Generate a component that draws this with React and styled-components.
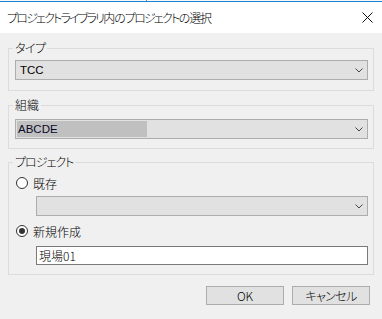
import React from "react";
import styled, { createGlobalStyle } from "styled-components";

const GlobalStyle = createGlobalStyle`
  body {
    margin: 0;
    background: #f0f0f0;
    font-family: "Noto Sans CJK JP", "Liberation Sans", sans-serif;
    font-size: 12px;
    font-weight: 300;
    color: #000;
  }
`;

let Window = styled.div({
  width: "382px",
  height: "319px",
  background: "#f0f0f0",
  display: "flex",
  flexDirection: "column",
  overflow: "hidden",
  position: "relative",
});

let TopEdge = styled.div({
  height: "1px",
  background: "#f7f7f7",
  borderBottom: "1px solid #1883d7",
});

let Tick = styled.div({
  position: "absolute",
  left: "146px",
  top: "0",
  width: "1px",
  height: "1px",
  background: "#8a8a8a",
});

let TitleBar = styled.div({
  height: "31px",
  background: "#fff",
  display: "flex",
  alignItems: "center",
  justifyContent: "space-between",
  padding: "0 9px 0 7px",
});

// katakana in the reference font is narrow, so kana runs get tightened
let Kana = styled.span(({ tight }) => ({
  letterSpacing: `${tight ?? -1}px`,
  fontFeatureSettings: '"palt"',
}));

let TitleText = styled.div({
  fontSize: "12px",
  lineHeight: "14px",
  marginTop: "1px",
  letterSpacing: "-1.2px",
});

let Body = styled.div({
  display: "flex",
  flexDirection: "column",
  padding: "0 8px",
});

let Group = styled.fieldset(({ top, pt, pb }) => ({
  margin: `${top}px 0 0 0`,
  padding: `${pt}px 5px ${pb}px 6px`,
  border: "1px solid #dcdcdc",
  minWidth: 0,
  display: "flex",
  flexDirection: "column",
}));

let Legend = styled.legend({
  padding: "0 2px",
  marginLeft: "-2px",
  lineHeight: "14px",
  height: "14px",
});

let Select = styled.div(({ disabled, indent }) => ({
  height: "20px",
  boxSizing: "border-box",
  border: "1px solid #adadad",
  background: "#e1e1e1",
  marginLeft: indent ? `${indent}px` : 0,
  display: "flex",
  alignItems: "center",
  justifyContent: "space-between",
  padding: "0 4px 0 2px",
  color: disabled ? "#888" : "#000",
}));

let SelectValue = styled.span(({ selected }) => ({
  display: "flex",
  alignItems: "center",
  height: "16px",
  width: selected ? "129px" : "auto",
  paddingLeft: selected ? "1px" : "2px",
  marginLeft: selected ? "-1px" : 0,
  background: selected ? "#c0c0c0" : "transparent",
  fontFamily: '"Liberation Sans", sans-serif',
  fontWeight: 400,
  fontSize: "11.5px",
  color: selected ? "#0a0a28" : "#000",
}));

let RadioRow = styled.label(({ gapTop }) => ({
  display: "flex",
  alignItems: "center",
  height: "14px",
  marginTop: `${gapTop}px`,
  gap: "5px",
  paddingLeft: "1px",
}));

let RadioDot = styled.span(({ checked }) => ({
  width: "12px",
  height: "12px",
  boxSizing: "border-box",
  borderRadius: "50%",
  border: "1px solid #333",
  background: "#fff",
  display: "flex",
  alignItems: "center",
  justifyContent: "center",
  "&::after": {
    content: '""',
    width: "6px",
    height: "6px",
    borderRadius: "50%",
    background: checked ? "#333" : "transparent",
  },
}));

let TextInput = styled.div({
  height: "19px",
  boxSizing: "border-box",
  border: "1px solid #7a7a7a",
  background: "#fff",
  marginLeft: "21px",
  marginTop: "8px",
  display: "flex",
  alignItems: "center",
  padding: "0 2px",
});

let Footer = styled.div({
  display: "flex",
  justifyContent: "flex-end",
  gap: "8px",
  marginTop: "11px",
  paddingRight: "4px",
});

let Button = styled.div({
  width: "78px",
  height: "19px",
  boxSizing: "border-box",
  border: "1px solid #adadad",
  background: "#e1e1e1",
  display: "flex",
  alignItems: "center",
  justifyContent: "center",
});

function Chevron() {
  return (
    <svg width="8" height="5" viewBox="0 0 8 5">
      <path d="M0.5 0.5 L4 4 L7.5 0.5" fill="none" stroke="#444" strokeWidth="1" />
    </svg>
  );
}

function CloseIcon() {
  return (
    <svg width="11" height="11" viewBox="0 0 11 11">
      <path d="M0.5 0.5 L10.5 10.5 M10.5 0.5 L0.5 10.5" stroke="#111" strokeWidth="1" />
    </svg>
  );
}

export default function App() {
  return (
    <Window>
      <GlobalStyle />
      <TopEdge />
      <Tick />
      <TitleBar>
        <TitleText>
          <Kana tight={-1.8}>プロジェクトライブラリ</Kana>内の
          <Kana tight={-1.8}>プロジェクト</Kana>の選択
        </TitleText>
        <CloseIcon />
      </TitleBar>
      <Body>
        <Group top={8} pt={5} pb={10}>
          <Legend>
            <Kana tight={-0.6}>タイプ</Kana>
          </Legend>
          <Select>
            <SelectValue>TCC</SelectValue>
            <Chevron />
          </Select>
        </Group>
        <Group top={7} pt={7} pb={9}>
          <Legend>組織</Legend>
          <Select>
            <SelectValue selected>ABCDE</SelectValue>
            <Chevron />
          </Select>
        </Group>
        <Group top={6} pt={7} pb={9}>
          <Legend>
            <Kana tight={-1}>プロジェクト</Kana>
          </Legend>
          <RadioRow gapTop={0}>
            <RadioDot />
            既存
          </RadioRow>
          <Select disabled indent={21} style={{ marginTop: "6px" }}>
            <span />
            <Chevron />
          </Select>
          <RadioRow gapTop={8}>
            <RadioDot checked />
            新規作成
          </RadioRow>
          <TextInput>現場01</TextInput>
        </Group>
        <Footer>
          <Button>OK</Button>
          <Button>
            <Kana tight={-0.6}>キャンセル</Kana>
          </Button>
        </Footer>
      </Body>
    </Window>
  );
}
